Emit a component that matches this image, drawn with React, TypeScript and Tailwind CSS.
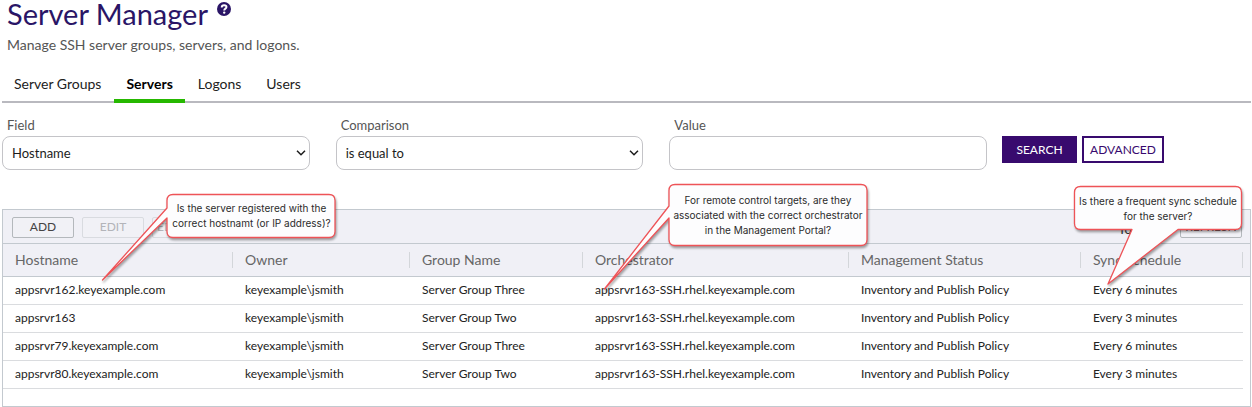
import type { ReactNode } from "react";

type Server = {
  host: string;
  owner: string;
  group: string;
  orchestrator: string;
  status: string;
  schedule: string;
};

const servers: Server[] = [
  { host: "appsrvr162.keyexample.com", owner: "keyexample\\jsmith", group: "Server Group Three", orchestrator: "appsrvr163-SSH.rhel.keyexample.com", status: "Inventory and Publish Policy", schedule: "Every 6 minutes" },
  { host: "appsrvr163", owner: "keyexample\\jsmith", group: "Server Group Two", orchestrator: "appsrvr163-SSH.rhel.keyexample.com", status: "Inventory and Publish Policy", schedule: "Every 3 minutes" },
  { host: "appsrvr79.keyexample.com", owner: "keyexample\\jsmith", group: "Server Group Three", orchestrator: "appsrvr163-SSH.rhel.keyexample.com", status: "Inventory and Publish Policy", schedule: "Every 6 minutes" },
  { host: "appsrvr80.keyexample.com", owner: "keyexample\\jsmith", group: "Server Group Two", orchestrator: "appsrvr163-SSH.rhel.keyexample.com", status: "Inventory and Publish Policy", schedule: "Every 3 minutes" },
];

const tabs = ["Server Groups", "Servers", "Logons", "Users"];

function Tab({ label, active }: { label: string; active: boolean }) {
  return (
    <a
      href="#"
      aria-current={active ? "page" : undefined}
      className={
        active
          ? "border-b-4 border-[#26b800] px-3 pt-1 pb-[5px] font-bold text-black"
          : "border-b-4 border-transparent px-3 pt-1 pb-[5px] text-[#222]"
      }
    >
      {label}
    </a>
  );
}

function SelectField({ id, label, value }: { id: string; label: string; value: string }) {
  return (
    <div className="flex min-w-0 flex-col">
      <label htmlFor={id} className="pl-[5px] text-[13px] leading-5 text-[#555]">{label}</label>
      <div className="relative mt-px">
        <select
          id={id}
          defaultValue={value}
          className="h-[34px] w-full appearance-none rounded-lg border border-[#c4c4c8] bg-white pt-px pr-8 pl-[9px] text-[13px] text-[#1c1c1c]"
        >
          <option>{value}</option>
        </select>
        <svg viewBox="0 0 10 6" className="pointer-events-none absolute top-[14px] right-1 h-[6px] w-[10px]" aria-hidden="true">
          <path d="M1 0.8 L5 4.8 L9 0.8" fill="none" stroke="#1c1c1c" strokeWidth="1.5" />
        </svg>
      </div>
    </div>
  );
}

function GridButton({ children, disabled }: { children: ReactNode; disabled?: boolean }) {
  return (
    <button
      type="button"
      disabled={disabled}
      className="h-[21px] min-w-[62px] rounded-xs border border-[#b4b8bc] bg-[#f1f1f6] px-1 text-[12px] leading-none text-[#444] disabled:border-[#d9dbe0] disabled:text-[#b3b4b9]"
    >
      {children}
    </button>
  );
}

function HeaderCell({ title, children }: { title: string; children?: ReactNode }) {
  return (
    <th scope="col" className="relative h-[33px] border-b border-[#c3c9cf] p-0 text-left font-normal">
      <div className="flex items-center">
        <span className="grow pl-3 text-[14px] leading-4 whitespace-nowrap text-[#666]">{title}</span>
        <span className="h-4 w-px bg-[#d3d6da]" />
      </div>
      {children}
    </th>
  );
}

function Bubble({ path, width, height }: { path: string; width: number; height: number }) {
  return (
    <svg width={width} height={height} className="absolute top-0 left-0 overflow-visible drop-shadow-[1px_2px_1px_rgba(0,0,0,0.35)]" aria-hidden="true">
      <path d={path} fill="#fdfdfe" stroke="#ee5357" strokeWidth="1.3" strokeLinejoin="round" />
    </svg>
  );
}

const cell = "h-7 border-b border-[#dadcdf] p-0 pb-[2px] pl-3 whitespace-nowrap";
const note = "relative text-center font-['Inter','Liberation_Sans',sans-serif] text-[10px] leading-[15px] whitespace-nowrap text-[#2b2b2b]";

export default function App() {
  return (
    <main className="min-w-[1180px] bg-white pr-px pl-[2px] font-['Lato','Liberation_Sans',sans-serif] text-[13px] text-[#222]">
      <header className="pl-[5px]">
        <h1 className="flex items-start text-[29px] leading-[27px] font-normal text-[#2a1566]">
          Server Manager
          <button type="button" aria-label="Help" className="mt-[2px] ml-[9px]">
            <svg viewBox="0 0 14 14" className="h-[14px] w-[14px]" aria-hidden="true">
              <circle cx="7" cy="7" r="7" fill="#2a1566" />
              <path d="M4.7 5.4C4.7 3.9 5.7 3.2 7.1 3.2C8.5 3.2 9.5 4 9.5 5.1C9.5 6.7 7.2 6.6 7.2 8.5" fill="none" stroke="#fff" strokeWidth="1.9" />
              <circle cx="7.2" cy="10.6" r="1.2" fill="#fff" />
            </svg>
          </button>
        </h1>
        <p className="mt-2 text-[14px] leading-5 text-[#555]">Manage SSH server groups, servers, and logons.</p>
      </header>

      <nav aria-label="Sections" className="mt-[15px] flex border-b-2 border-[#b9b9bf] text-[14px] leading-5">
        <div className="-mb-[2px] flex gap-px">
          {tabs.map((t) => (
            <Tab key={t} label={t} active={t === "Servers"} />
          ))}
        </div>
      </nav>

      <form className="mt-3 flex items-end" onSubmit={(e) => e.preventDefault()}>
        <div className="grid grow grid-cols-[308fr_308fr_318fr] gap-x-[26px]">
          <SelectField id="field" label="Field" value="Hostname" />
          <SelectField id="comparison" label="Comparison" value="is equal to" />
          <div className="flex min-w-0 flex-col">
            <label htmlFor="value" className="pl-[5px] text-[13px] leading-5 text-[#555]">Value</label>
            <input id="value" type="text" className="mt-px h-[34px] w-full rounded-lg border border-[#c4c4c8] bg-white px-2 text-[13px]" />
          </div>
        </div>
        <div className="mr-[87px] mb-[7px] ml-[15px] flex gap-[5px] text-[12px] leading-none">
          <button type="submit" className="h-[27px] w-[75px] bg-[#380a6e] text-white">SEARCH</button>
          <button type="button" className="h-[27px] w-[82px] border-2 border-[#380a6e] bg-white text-[#380a6e]">ADVANCED</button>
        </div>
      </form>

      <section aria-label="Servers" className="mt-[39px] border border-[#c3c9cf] bg-white pb-[17px]">
        <div className="flex h-[34px] items-center gap-2 border-b border-[#c3c9cf] bg-[#f0f0f6] pt-px pr-2 pl-[9px]">
          <GridButton>ADD</GridButton>
          <GridButton disabled>EDIT</GridButton>
          <GridButton disabled>EDIT ACCESS</GridButton>
          <span className="mr-3 ml-auto pt-[6px] text-[13px] text-[#333]">Total: 4</span>
          <GridButton>REFRESH</GridButton>
        </div>
        <div className="bg-[linear-gradient(#f0f0f6_32px,#c3c9cf_32px,#c3c9cf_33px,#fff_33px)] pr-[7px]">
          <table className="w-full table-fixed border-separate border-spacing-0">
            <colgroup>
              <col className="w-[18.55%]" />
              <col className="w-[14.27%]" />
              <col className="w-[13.95%]" />
              <col className="w-[21.45%]" />
              <col className="w-[18.71%]" />
              <col />
            </colgroup>
            <thead>
              <tr>
                <HeaderCell title="Hostname">
                  <div role="note" className="absolute -top-[50px] left-[99px] z-10 h-[86px] w-[234px] pl-[65px]">
                    <Bubble width={234} height={86} path="M71 0.5H227Q233 0.5 233 6.5V37.5Q233 43.5 227 43.5H71Q65 43.5 65 37.5V24L0.5 86L65 14V6.5Q65 0.5 71 0.5Z" />
                    <p className={`${note} pt-[7px]`}>
                      Is the server registered with the<br />correct hostnamt (or IP address)?
                    </p>
                  </div>
                </HeaderCell>
                <HeaderCell title="Owner" />
                <HeaderCell title="Group Name" />
                <HeaderCell title="Orchestrator">
                  <div role="note" className="absolute -top-[60px] left-[21px] z-10 h-[105px] w-[264px] pl-[64px]">
                    <Bubble width={264} height={105} path="M71 0.5H257Q263 0.5 263 6.5V55.5Q263 61.5 257 61.5H71Q65 61.5 65 55.5V34L0.5 105L65 22V6.5Q65 0.5 71 0.5Z" />
                    <p className={`${note} pt-[9px]`}>
                      For remote control targets, are they<br />associated with the correct orchestrator<br />in the Management Portal?
                    </p>
                  </div>
                </HeaderCell>
                <HeaderCell title="Management Status" />
                <HeaderCell title="Sync Schedule">
                  <div role="note" className="absolute -top-[58px] right-px z-10 h-[98px] w-[168px]">
                    <Bubble width={168} height={98} path="M6.5 0.5H161.5Q167.5 0.5 167.5 6.5V37.5Q167.5 43.5 161.5 43.5H104L34 98L58 43.5H6.5Q0.5 43.5 0.5 37.5V6.5Q0.5 0.5 6.5 0.5Z" />
                    <p className={`${note} pt-[8px]`}>
                      Is there a frequent sync schedule<br />for the server?
                    </p>
                  </div>
                </HeaderCell>
              </tr>
            </thead>
            <tbody className="text-[12px] leading-4">
              {servers.map((s) => (
                <tr key={s.host}>
                  <td className={cell}>{s.host}</td>
                  <td className={cell}>{s.owner}</td>
                  <td className={cell}>{s.group}</td>
                  <td className={cell}>{s.orchestrator}</td>
                  <td className={cell}>{s.status}</td>
                  <td className={cell}>{s.schedule}</td>
                </tr>
              ))}
            </tbody>
          </table>
        </div>
      </section>
    </main>
  );
}
